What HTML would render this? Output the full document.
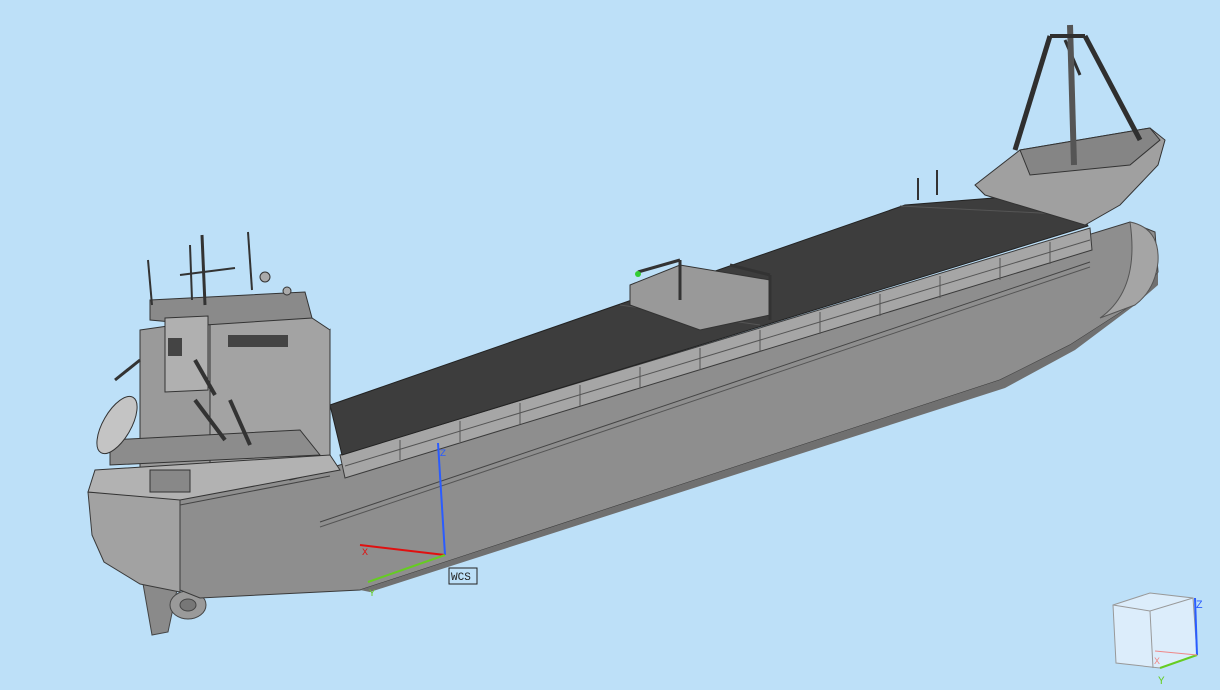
<!DOCTYPE html>
<html><head><meta charset="utf-8"><style>
html,body{margin:0;padding:0;width:1220px;height:690px;overflow:hidden;background:#bde0f8;}
svg{display:block}
text{font-family:"Liberation Mono",monospace}
</style></head><body>
<svg width="1220" height="690" viewBox="0 0 1220 690" xmlns="http://www.w3.org/2000/svg">
<rect width="1220" height="690" fill="#bde0f8"/>
<!-- rudder & propeller -->
<polygon points="142,578 152,635 168,632 178,585" fill="#8a8a8a" stroke="#444" stroke-width="1"/>
<ellipse cx="188" cy="605" rx="18" ry="14" fill="#9a9a9a" stroke="#444"/>
<ellipse cx="188" cy="605" rx="8" ry="6" fill="#777" stroke="#444"/>
<!-- hull side -->
<polygon points="180,498 330,468 1130,222 1155,232 1158,272 1140,300 1070,345 1000,380 360,590 300,593 200,598 180,590" fill="#8e8e8e" stroke="#3a3a3a" stroke-width="1"/>
<polygon points="360,590 1000,380 1070,345 1140,300 1158,272 1158,285 1135,305 1075,350 1005,388 370,592" fill="#707070"/>
<!-- stern face -->
<polygon points="88,492 180,498 180,592 140,584 104,562 92,535" fill="#a2a2a2" stroke="#3a3a3a" stroke-width="1"/>
<!-- bow bulge -->
<path d="M1130,222 Q1160,228 1158,262 Q1155,290 1135,305 L1100,318 Q1140,290 1130,222Z" fill="#a5a5a5" stroke="#555"/>
<!-- hull lines -->
<line x1="320" y1="522" x2="1090" y2="262" stroke="#444" stroke-width="1"/>
<line x1="320" y1="527" x2="1090" y2="267" stroke="#555" stroke-width="1"/>
<line x1="180" y1="505" x2="330" y2="476" stroke="#444"/>
<!-- bulwark band -->
<polygon points="340,455 1090,228 1092,250 345,478" fill="#a6a6a6" stroke="#3a3a3a" stroke-width="1"/>
<line x1="345" y1="466" x2="1090" y2="240" stroke="#555"/>
<g stroke="#555" stroke-width="1">
<line x1="400" y1="440" x2="400" y2="460"/><line x1="460" y1="421" x2="460" y2="442"/><line x1="520" y1="403" x2="520" y2="424"/><line x1="580" y1="385" x2="580" y2="406"/><line x1="640" y1="367" x2="640" y2="388"/><line x1="700" y1="348" x2="700" y2="370"/><line x1="760" y1="330" x2="760" y2="352"/><line x1="820" y1="312" x2="820" y2="334"/><line x1="880" y1="294" x2="880" y2="316"/><line x1="940" y1="276" x2="940" y2="298"/><line x1="1000" y1="258" x2="1000" y2="280"/><line x1="1050" y1="242" x2="1050" y2="264"/>
</g>
<!-- deck / hatch covers -->
<polygon points="330,405 905,205 1068,192 1088,226 342,455" fill="#3d3d3d" stroke="#222"/>
<line x1="620" y1="305" x2="760" y2="325" stroke="#555"/>
<line x1="900" y1="206" x2="1080" y2="215" stroke="#555"/>
<!-- midship crane -->
<polygon points="630,285 680,265 770,280 770,315 700,330 630,305" fill="#999" stroke="#333"/>
<line x1="638" y1="272" x2="680" y2="260" stroke="#333" stroke-width="3"/>
<line x1="680" y1="260" x2="680" y2="300" stroke="#333" stroke-width="3"/>
<line x1="730" y1="265" x2="770" y2="275" stroke="#333" stroke-width="3"/>
<line x1="770" y1="275" x2="770" y2="320" stroke="#333" stroke-width="3"/>
<circle cx="638" cy="274" r="3" fill="#3c3"/>
<!-- superstructure -->
<polygon points="290,395 330,330 330,470 290,480" fill="#8f8f8f" stroke="#333"/>
<polygon points="205,315 300,310 330,330 330,470 205,470" fill="#a3a3a3" stroke="#333"/>
<polygon points="140,330 210,320 210,480 140,480" fill="#9a9a9a" stroke="#333"/>
<polygon points="150,300 305,292 312,318 205,325 150,320" fill="#8a8a8a" stroke="#333"/>
<polygon points="165,318 208,316 208,390 165,392" fill="#b0b0b0" stroke="#333"/>
<rect x="228" y="335" width="60" height="12" fill="#444"/>
<rect x="168" y="338" width="14" height="18" fill="#444"/>
<polygon points="95,470 330,455 340,470 180,500 88,492" fill="#b2b2b2" stroke="#333"/>
<polygon points="110,440 300,430 320,455 110,465" fill="#8c8c8c" stroke="#333"/>
<rect x="150" y="470" width="40" height="22" fill="#888" stroke="#333"/>
<!-- lifeboat -->
<ellipse cx="117" cy="425" rx="14" ry="32" transform="rotate(30 117 425)" fill="#c4c4c4" stroke="#333"/>
<line x1="115" y1="380" x2="140" y2="360" stroke="#333" stroke-width="3"/>
<!-- stairs -->
<line x1="195" y1="400" x2="225" y2="440" stroke="#333" stroke-width="4"/>
<line x1="230" y1="400" x2="250" y2="445" stroke="#333" stroke-width="4"/>
<line x1="195" y1="360" x2="215" y2="395" stroke="#333" stroke-width="4"/>
<!-- masts -->
<line x1="202" y1="235" x2="205" y2="305" stroke="#333" stroke-width="3"/>
<line x1="190" y1="245" x2="192" y2="300" stroke="#333" stroke-width="2"/>
<line x1="180" y1="275" x2="235" y2="268" stroke="#333" stroke-width="2"/>
<line x1="248" y1="232" x2="252" y2="290" stroke="#333" stroke-width="2"/>
<line x1="148" y1="260" x2="152" y2="305" stroke="#333" stroke-width="2"/>
<circle cx="265" cy="277" r="5" fill="#aaa" stroke="#333"/>
<circle cx="287" cy="291" r="4" fill="#aaa" stroke="#333"/>
<!-- forecastle -->
<polygon points="975,185 1020,150 1150,128 1165,140 1158,165 1120,205 1085,225 985,195" fill="#a0a0a0" stroke="#333"/>
<polygon points="1020,150 1150,128 1160,140 1130,165 1030,175" fill="#858585" stroke="#333"/>
<line x1="1050" y1="36" x2="1015" y2="150" stroke="#2f2f2f" stroke-width="5"/>
<line x1="1085" y1="36" x2="1140" y2="140" stroke="#2f2f2f" stroke-width="5"/>
<line x1="1065" y1="40" x2="1080" y2="75" stroke="#2f2f2f" stroke-width="3"/>
<line x1="1070" y1="25" x2="1074" y2="165" stroke="#555" stroke-width="6"/>
<line x1="1050" y1="36" x2="1085" y2="36" stroke="#2f2f2f" stroke-width="4"/>
<line x1="918" y1="178" x2="918" y2="200" stroke="#333" stroke-width="2"/>
<line x1="937" y1="170" x2="937" y2="195" stroke="#333" stroke-width="2"/>
<!-- WCS axes -->
<line x1="445" y1="555" x2="438" y2="443" stroke="#2a5cff" stroke-width="2"/>
<text x="440" y="456" font-size="10" fill="#2a5cff">Z</text>
<line x1="445" y1="555" x2="360" y2="545" stroke="#e01010" stroke-width="2"/>
<text x="362" y="555" font-size="10" fill="#e01010">X</text>
<line x1="445" y1="555" x2="368" y2="582" stroke="#66cc22" stroke-width="2"/>
<text x="369" y="596" font-size="10" fill="#66cc22">Y</text>
<rect x="449" y="568" width="28" height="16" fill="none" stroke="#222"/>
<text x="451" y="580" font-size="11" fill="#222">WCS</text>
<!-- view cube -->
<polygon points="1113,605 1150,593 1193,598 1197,655 1160,668 1116,663" fill="#dcedfb" stroke="#999"/>
<polyline points="1113,605 1150,611 1193,598" fill="none" stroke="#999"/>
<line x1="1150" y1="611" x2="1153" y2="668" stroke="#999"/>
<line x1="1195" y1="598" x2="1197" y2="655" stroke="#2a5cff" stroke-width="2"/>
<text x="1196" y="608" font-size="11" fill="#2a5cff">Z</text>
<line x1="1160" y1="668" x2="1197" y2="655" stroke="#66cc22" stroke-width="2"/>
<line x1="1155" y1="651" x2="1197" y2="655" stroke="#e88" stroke-width="1"/>
<text x="1154" y="664" font-size="10" fill="#e88">X</text>
<text x="1158" y="684" font-size="11" fill="#66cc22">Y</text>
</svg>
</body></html>
